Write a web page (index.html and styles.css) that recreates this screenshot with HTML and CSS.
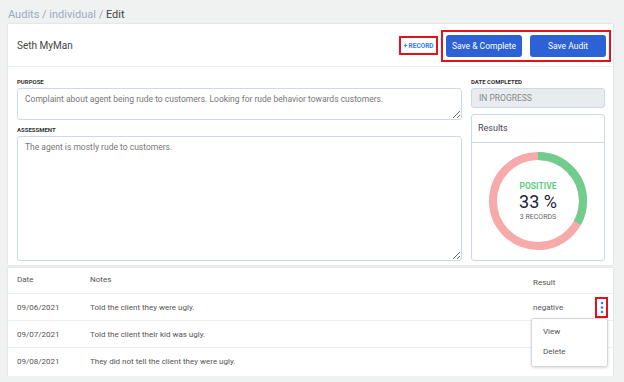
FILE: index.html
```html
<!DOCTYPE html>
<html lang="en">
<head>
    <meta charset="UTF-8">
    <title>Audit Edit</title>
    <link rel="stylesheet" href="styles.css">
</head>
<body>
    <div class="breadcrumb">
        <span class="crumb">Audits</span> / <span class="crumb">individual</span> / <span class="current">Edit</span>
    </div>

    <div class="page">
        <div class="card">
            <div class="cardHeader">
                <div class="agentName">Seth MyMan</div>
                <div class="headerActions">
                    <div class="markBox">
                        <button class="linkBtn">+ RECORD</button>
                    </div>
                    <div class="markBox btnGroup">
                        <button class="primaryBtn">Save &amp; Complete</button>
                        <button class="primaryBtn">Save Audit</button>
                    </div>
                </div>
            </div>
            <div class="cardBody">
                <div class="mainCol">
                    <label class="fieldLabel">PURPOSE</label>
                    <textarea class="field purpose">Complaint about agent being rude to customers. Looking for rude behavior towards customers.</textarea>
                    <label class="fieldLabel">ASSESSMENT</label>
                    <textarea class="field assessment">The agent is mostly rude to customers.</textarea>
                </div>
                <div class="sideCol">
                    <label class="fieldLabel">DATE COMPLETED</label>
                    <input class="field dateInput" type="text" value="IN PROGRESS" disabled>
                    <div class="resultsCard">
                        <div class="resultsHeader">Results</div>
                        <div class="resultsBody">
                            <div class="donut">
                                <svg width="98" height="98" viewBox="0 0 98 98">
                                    <circle cx="49" cy="49" r="45" fill="none" stroke="#f6aaa9" stroke-width="8"></circle>
                                    <circle cx="49" cy="49" r="45" fill="none" stroke="#6fce8e" stroke-width="8"
                                        stroke-dasharray="93.3 282.7" transform="rotate(-90 49 49)"></circle>
                                </svg>
                                <div class="donutText">
                                    <div class="positive">POSITIVE</div>
                                    <div class="percent">33 %</div>
                                    <div class="records">3 RECORDS</div>
                                </div>
                            </div>
                        </div>
                    </div>
                </div>
            </div>
        </div>

        <div class="card tableCard">
            <div class="row headRow">
                <div>Date</div>
                <div>Notes</div>
                <div>Result</div>
            </div>
            <div class="row">
                <div>09/06/2021</div>
                <div>Told the client they were ugly.</div>
                <div class="resultCell">negative
                    <span class="kebab markBox"><svg width="4" height="13" viewBox="0 0 4 13"><circle cx="2" cy="2" r="1.3" fill="#3b7ae0"/><circle cx="2" cy="6.5" r="1.3" fill="#3b7ae0"/><circle cx="2" cy="11" r="1.3" fill="#3b7ae0"/></svg></span>
                    <div class="menu">
                        <div class="menuItem">View</div>
                        <div class="menuItem">Delete</div>
                    </div>
                </div>
            </div>
            <div class="row">
                <div>09/07/2021</div>
                <div>Told the client their kid was ugly.</div>
                <div></div>
            </div>
            <div class="row">
                <div>09/08/2021</div>
                <div>They did not tell the client they were ugly.</div>
                <div class="resultCell"><span class="peekDot"></span></div>
            </div>
        </div>
    </div>
</body>
</html>
```

FILE: styles.css
```css
body {
    margin: 0;
    background: #f0f1f1;
    font-family: Roboto, "Liberation Sans", sans-serif;
    color: #444;
}

.breadcrumb {
    height: 24px;
    padding-left: 8px;
    font-size: 11px;
    line-height: 29px;
    color: #9aabc0;
}

.crumb {
    color: #9aabc0;
}

.current {
    color: #444;
}

.page {
    margin: 0 11px 0 8px;
    display: flex;
    flex-direction: column;
    gap: 3px;
}

.card {
    background: #fff;
    box-shadow: 0 0 2px rgba(0, 0, 0, 0.12);
}

.cardHeader {
    height: 42px;
    border-bottom: 1px solid #eceeef;
    display: flex;
    align-items: center;
    justify-content: space-between;
    padding: 0 2px 0 9px;
}

.agentName {
    font-size: 10px;
    color: #444;
}

.headerActions {
    display: flex;
    align-items: center;
    gap: 3px;
    margin-top: 1px;
}

.markBox {
    border: 2px solid #e0121b;
}

.linkBtn {
    border: none;
    background: #fff;
    color: #3b7ae0;
    font-family: inherit;
    font-size: 6.5px;
    font-weight: 700;
    height: 15px;
    width: 35px;
    padding: 0;
    display: block;
}

.btnGroup {
    display: flex;
    gap: 8px;
    padding: 3px;
}

.primaryBtn {
    width: 76px;
    height: 22px;
    border: none;
    border-radius: 3px;
    background: #2d62d6;
    color: #fff;
    font-family: inherit;
    font-size: 8.5px;
    font-weight: 400;
    padding: 0;
}

.cardBody {
    display: flex;
    gap: 9px;
    padding: 11px 8px 4px 9px;
}

.mainCol {
    flex: 1;
    display: flex;
    flex-direction: column;
}

.sideCol {
    width: 134px;
    display: flex;
    flex-direction: column;
}

.fieldLabel {
    font-size: 6px;
    font-weight: 700;
    color: #333;
    height: 10px;
    line-height: 8px;
}

.field {
    box-sizing: border-box;
    border: 1px solid #c9d9ea;
    border-radius: 3px;
    font-family: inherit;
    font-size: 8.5px;
    color: #777;
    padding: 5px 7px;
    resize: vertical;
    margin: 0 0 6px;
}

.purpose {
    height: 32px;
}

.assessment {
    height: 125px;
    margin-bottom: 0;
}

.dateInput {
    height: 20px;
    background: #e8ecef;
    color: #888;
    padding: 0 7px;
    margin-bottom: 6px;
}

.resultsCard {
    height: 147px;
    box-sizing: border-box;
    border: 1px solid #c9d9ea;
    border-radius: 3px;
    display: flex;
    flex-direction: column;
}

.resultsHeader {
    height: 27px;
    line-height: 26px;
    border-bottom: 1px solid #c9d9ea;
    padding-left: 6px;
    font-size: 9px;
    color: #445;
}

.resultsBody {
    flex: 1;
    display: flex;
    align-items: center;
    justify-content: center;
    padding-bottom: 2px;
}

.donut {
    position: relative;
    width: 98px;
    height: 98px;
}

.donut svg {
    display: block;
}

.donutText {
    position: absolute;
    inset: 0;
    display: flex;
    flex-direction: column;
    align-items: center;
    justify-content: center;
}

.positive {
    color: #5ccf7e;
    font-size: 8.5px;
    font-weight: 700;
}

.percent {
    font-size: 18px;
    color: #223;
    line-height: 22px;
}

.records {
    font-size: 7px;
    color: #666;
}

.tableCard {
    padding-bottom: 1px;
}

.row {
    display: grid;
    grid-template-columns: 73px 1fr 80px;
    align-items: center;
    height: 27px;
    border-bottom: 1px solid #eceeef;
    padding-left: 9px;
    font-size: 8px;
    color: #555;
    box-sizing: border-box;
}

.row:last-child {
    border-bottom: none;
}

.headRow {
    height: 26px;
}

.headRow div {
    margin-top: -3px;
}

.headRow div:last-child {
    margin-top: 4px;
}

.resultCell {
    position: relative;
    height: 100%;
    display: flex;
    align-items: center;
}

.kebab {
    position: absolute;
    left: 62px;
    top: 3px;
    width: 9px;
    height: 17px;
    display: flex;
    align-items: center;
    justify-content: center;
}

.menu {
    position: absolute;
    left: -2px;
    top: 24px;
    width: 77px;
    height: 49px;
    box-sizing: border-box;
    background: #fff;
    border: 1px solid #d5d8db;
    border-radius: 3px;
    box-shadow: 0 1px 3px rgba(0, 0, 0, 0.15);
    padding-top: 6px;
    z-index: 2;
}

.menuItem {
    height: 20px;
    line-height: 14px;
    padding-left: 11px;
    font-size: 8px;
    color: #555;
}

.peekDot {
    position: absolute;
    left: 67px;
    top: 17px;
    width: 2px;
    height: 2px;
    border-radius: 50%;
    background: #3b7ae0;
}
```
